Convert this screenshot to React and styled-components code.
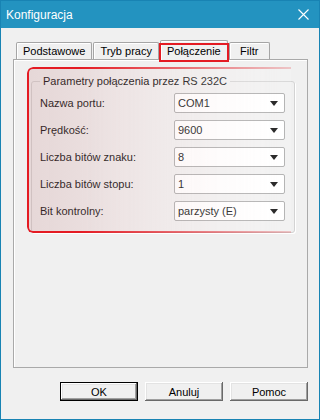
import React from 'react';
import styled, { createGlobalStyle } from 'styled-components';

const GlobalStyle = createGlobalStyle`
  html, body {
    margin: 0;
    padding: 0;
    background: #f0f0f0;
  }
  body {
    font-family: "Liberation Sans", Arial, sans-serif;
    font-size: 11px;
    color: #000;
  }
  * { box-sizing: border-box; }
`;

const Window = styled.div`
  width: 320px;
  height: 420px;
  border: 1px solid #1883b3;
  display: flex;
  flex-direction: column;
  background: #f0f0f0;
`;

const TitleBar = styled.div`
  flex: none;
  height: 27px;
  background: #2393c0;
  color: #fff;
  display: flex;
  align-items: center;
  justify-content: space-between;
  padding: 0 10px 0 5px;
  font-size: 12px;
`;

const Body = styled.div`
  flex: 1;
  display: flex;
  flex-direction: column;
  padding: 12px 11px 18px 12px;
`;

const TabStrip = styled.div`
  display: flex;
  align-items: flex-end;
  height: 20px;
  padding-left: 3px;
  margin-bottom: -1px;
  position: relative;
  z-index: 1;
`;

const Tab = styled.div`
  position: relative;
  height: ${p => (p.$active ? '20px' : '17px')};
  margin-bottom: ${p => (p.$active ? '0' : '1px')};
  margin-right: 1px;
  min-width: 41px;
  padding: 0 6px;
  border: 1px solid #a5a5a5;
  border-bottom: none;
  border-radius: 2px 2px 0 0;
  background: #f0f0f0;
  box-shadow: inset 1px 1px 0 #fff;
  display: flex;
  align-items: center;
  justify-content: center;
  white-space: nowrap;

  ${p => p.$active && `
    &::after {
      content: '';
      position: absolute;
      top: 2px;
      left: -2px;
      right: -2px;
      bottom: -2px;
      border: 2px solid #e41b23;
    }
  `}
`;

const Panel = styled.div`
  flex: 1;
  border: 1px solid #a9a9a9;
  box-shadow: inset 1px 1px 0 #fff;
  padding: 15px 12px 0 17px;
`;

const GroupWrap = styled.div`
  position: relative;
`;

const Group = styled.fieldset`
  margin: 0;
  border: 1px solid #d3d3d3;
  border-radius: 3px;
  box-shadow: 1px 1px 0 #fff;
  padding: 5px 9px 11px 8px;
  display: grid;
  grid-template-columns: 1fr 111px;
  row-gap: 7px;
  align-items: center;
`;

const Legend = styled.legend`
  padding: 0 3px;
  line-height: 13px;
`;

const Label = styled.span`
  white-space: nowrap;
`;

const Select = styled.div`
  height: 20px;
  border: 1px solid #a8a8a8;
  border-radius: 2px;
  background: #fff;
  display: flex;
  align-items: center;
  justify-content: space-between;
  padding: 0 6px 0 3px;
`;

const Arrow = styled.span`
  width: 0;
  height: 0;
  border-top: 5px solid #000;
  border-left: 4.5px solid transparent;
  border-right: 4.5px solid transparent;
`;

const Highlight = styled.div`
  position: absolute;
  left: -4px;
  top: -8px;
  width: 264px;
  height: 166px;
  pointer-events: none;
  border: 2px solid #e41b23;
  border-right: none;
  border-radius: 6px 0 0 6px;
  background: linear-gradient(90deg, rgba(200, 140, 140, 0.24) 0%, rgba(235, 195, 195, 0.25) 45%, rgba(255, 255, 255, 0.7) 100%);
  box-shadow: 1px 2px 3px rgba(0, 0, 0, 0.22);
  -webkit-mask-image: linear-gradient(90deg, #000 0%, #000 20%, rgba(0, 0, 0, 0.2) 100%);
  mask-image: linear-gradient(90deg, #000 0%, #000 20%, rgba(0, 0, 0, 0.2) 100%);

  &::before {
    content: '';
    position: absolute;
    left: -6px;
    top: 50%;
    margin-top: -3px;
    border-right: 4px solid #e41b23;
    border-top: 3px solid transparent;
    border-bottom: 3px solid transparent;
  }
`;

const ButtonRow = styled.div`
  display: flex;
  justify-content: flex-end;
  gap: 7px;
  margin-top: 14px;
`;

const Button = styled.button`
  width: 78px;
  height: 19px;
  padding: 0;
  font-family: "Liberation Sans", Arial, sans-serif;
  font-size: 11px;
  color: #000;
  background: #f0f0f0;
  border: ${p => (p.$default ? '1px solid #000' : 'none')};
  box-shadow: inset -1px -1px 0 #696969, inset 1px 1px 0 #fff,
    inset -2px -2px 0 #a0a0a0, inset 2px 2px 0 #e3e3e3;
`;

const fields = [
  ['Nazwa portu:', 'COM1'],
  ['Prędkość:', '9600'],
  ['Liczba bitów znaku:', '8'],
  ['Liczba bitów stopu:', '1'],
  ['Bit kontrolny:', 'parzysty (E)'],
];

const tabs = ['Podstawowe', 'Tryb pracy', 'Połączenie', 'Filtr'];

const CloseIcon = () => (
  <svg width="11" height="11" viewBox="0 0 11 11">
    <path d="M0.5 0.5 L10.5 10.5 M10.5 0.5 L0.5 10.5" stroke="#fff" strokeWidth="1.1" fill="none" />
  </svg>
);

export default function App() {
  return (
    <>
      <GlobalStyle />
      <Window>
        <TitleBar>
          <span>Konfiguracja</span>
          <CloseIcon />
        </TitleBar>
        <Body>
          <TabStrip>
            {tabs.map(t => (
              <Tab key={t} $active={t === 'Połączenie'}>{t}</Tab>
            ))}
          </TabStrip>
          <Panel>
            <GroupWrap>
              <Group>
                <Legend>Parametry połączenia przez RS 232C</Legend>
                {fields.map(([label, value]) => (
                  <React.Fragment key={label}>
                    <Label>{label}</Label>
                    <Select>
                      <span>{value}</span>
                      <Arrow />
                    </Select>
                  </React.Fragment>
                ))}
              </Group>
              <Highlight />
            </GroupWrap>
          </Panel>
          <ButtonRow>
            <Button $default>OK</Button>
            <Button>Anuluj</Button>
            <Button>Pomoc</Button>
          </ButtonRow>
        </Body>
      </Window>
    </>
  );
}
